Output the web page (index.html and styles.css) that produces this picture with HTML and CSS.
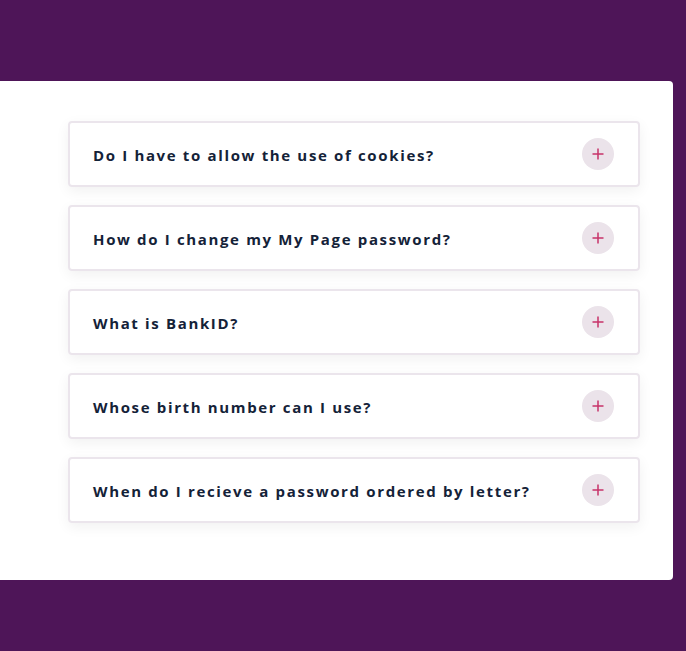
FILE: index.html
```html
<!DOCTYPE html>
<html lang="en">
<head>
  <meta charset="UTF-8">
  <meta name="viewport" content="width=device-width, initial-scale=1.0">
  <title>FAQ</title>
  <link rel="stylesheet" href="styles.css">
</head>
<body>
  <div class="panel">
    <div class="faq-list">
      <div class="faq-item">
        <span class="faq-question">Do I have to allow the use of cookies?</span>
        <button class="faq-toggle" type="button" aria-label="Open">
          <svg width="12" height="12" viewBox="0 0 12 12"><path d="M6 0.5v11M0.5 6h11"/></svg>
        </button>
      </div>
      <div class="faq-item">
        <span class="faq-question">How do I change my My Page password?</span>
        <button class="faq-toggle" type="button" aria-label="Open">
          <svg width="12" height="12" viewBox="0 0 12 12"><path d="M6 0.5v11M0.5 6h11"/></svg>
        </button>
      </div>
      <div class="faq-item">
        <span class="faq-question">What is BankID?</span>
        <button class="faq-toggle" type="button" aria-label="Open">
          <svg width="12" height="12" viewBox="0 0 12 12"><path d="M6 0.5v11M0.5 6h11"/></svg>
        </button>
      </div>
      <div class="faq-item">
        <span class="faq-question">Whose birth number can I use?</span>
        <button class="faq-toggle" type="button" aria-label="Open">
          <svg width="12" height="12" viewBox="0 0 12 12"><path d="M6 0.5v11M0.5 6h11"/></svg>
        </button>
      </div>
      <div class="faq-item">
        <span class="faq-question">When do I recieve a password ordered by letter?</span>
        <button class="faq-toggle" type="button" aria-label="Open">
          <svg width="12" height="12" viewBox="0 0 12 12"><path d="M6 0.5v11M0.5 6h11"/></svg>
        </button>
      </div>
    </div>
  </div>
</body>
</html>
```

FILE: styles.css
```css
body {
  margin: 0;
  padding: 81px 0 0;
  background-color: #4e1558;
  font-family: "Open Sans", Arial, sans-serif;
  min-height: 651px;
  box-sizing: border-box;
}
.panel {
  width: 673px;
  height: 499px;
  box-sizing: border-box;
  padding: 40px 0 0 68px;
  background: white;
  border-radius: 0 4px 4px 0;
}
.faq-list {
  display: flex;
  flex-direction: column;
  gap: 18px;
  width: 572px;
}
.faq-item {
  display: flex;
  align-items: center;
  justify-content: space-between;
  height: 66px;
  box-sizing: border-box;
  padding: 0 24px 0 23px;
  border: 2px solid #ebe5ec;
  border-radius: 4px;
  box-shadow: 0 4px 14px rgba(0, 0, 0, 0.06);
}
.faq-question {
  padding-top: 2px;
  font-size: 15px;
  font-weight: 700;
  letter-spacing: 1.65px;
  color: #142238;
}
.faq-toggle {
  display: flex;
  align-items: center;
  justify-content: center;
  width: 32px;
  height: 32px;
  padding: 0;
  border: none;
  border-radius: 50%;
  background-color: #ebe3ea;
}
.faq-toggle svg {
  stroke: #c8336a;
  stroke-width: 1.5;
  fill: none;
}
```
